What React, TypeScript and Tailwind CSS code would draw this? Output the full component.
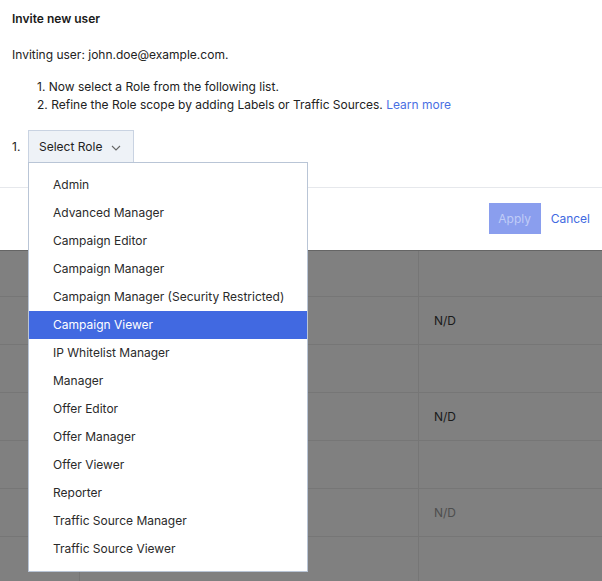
import React from "react";

const roles = [
  "Admin",
  "Advanced Manager",
  "Campaign Editor",
  "Campaign Manager",
  "Campaign Manager (Security Restricted)",
  "Campaign Viewer",
  "IP Whitelist Manager",
  "Manager",
  "Offer Editor",
  "Offer Manager",
  "Offer Viewer",
  "Reporter",
  "Traffic Source Manager",
  "Traffic Source Viewer",
];

const rows: { nd: string | null; light?: boolean }[] = [
  { nd: "N/D" },
  { nd: null },
  { nd: "N/D" },
  { nd: null },
  { nd: "N/D", light: true },
  { nd: null },
];

export default function App() {
  return (
    <div className="relative w-[602px] h-[581px] overflow-hidden bg-white font-['Inter',sans-serif] text-[12px] text-[#222]">
      {/* white dialog panel */}
      <div className="h-[250px] bg-white flex flex-col">
        <div className="px-3 pt-[10px]">
          <div className="h-[18px] leading-[18px] font-semibold text-[#1a1a1a]">Invite new user</div>
          <div className="mt-[18px] h-[18px] leading-[18px]">Inviting user: john.doe@example.com.</div>
          <ol className="mt-[14px] pl-[25px]">
            <li className="h-[18px] leading-[18px]">1. Now select a Role from the following list.</li>
            <li className="h-[18px] leading-[18px]">
              2. Refine the Role scope by adding Labels or Traffic Sources.{" "}
              <span className="text-[#4a6fe3]">Learn more</span>
            </li>
          </ol>
          <div className="mt-[16px] flex items-center">
            <span className="w-[16px]">1.</span>
            <div className="h-[33px] w-[106px] border border-[#c9d3e2] bg-[#eef2f7] flex items-center pl-[10px] gap-[9px] text-[#222]">
              <span>Select Role</span>
              <svg width="10" height="6" viewBox="0 0 10 6" className="mt-[2px]">
                <polyline points="1,1 5,5 9,1" fill="none" stroke="#666" strokeWidth="1.1" />
              </svg>
            </div>
          </div>
        </div>
        <div className="mt-[24px] border-t border-[#e6e8ec]" />
        <div className="flex justify-end items-start pt-[15px] pr-[12px] gap-[10px]">
          <div className="h-[31px] w-[52px] bg-[#8a9eee] text-[#c0ccf7] flex items-center justify-center pt-[1px]">Apply</div>
          <div className="h-[31px] flex items-center text-[#4169e1] pt-[1px]">Cancel</div>
        </div>
      </div>

      {/* dimmed table */}
      <div className="bg-[#808080] border-t border-[#656565]">
        <div className="flex h-[46px] border-b border-[#767676]">
          <div className="w-[80px] border-r border-[#767676]" />
          <div className="w-[339px] border-r border-[#767676]" />
          <div className="flex-1" />
        </div>
        {rows.map((r, i) => (
          <div key={i} className="flex h-[48px] border-b border-[#767676]">
            <div className="w-[80px] border-r border-[#767676]" />
            <div className="w-[339px] border-r border-[#767676]" />
            <div className={`flex-1 flex items-center pl-[15px] ${r.light ? "text-[#4e4e4e]" : "text-[#1a1a1a]"}`}>
              {r.nd}
            </div>
          </div>
        ))}
      </div>

      {/* dropdown menu */}
      <div className="absolute left-[28px] top-[162px] w-[280px] bg-white border border-[#b9c5d6] py-[8px]">
        {roles.map((role) => (
          <div
            key={role}
            className={`h-[28px] flex items-center pl-[24px] ${
              role === "Campaign Viewer" ? "bg-[#4169e1] text-white" : "text-[#2a2a2a]"
            }`}
          >
            {role}
          </div>
        ))}
      </div>
    </div>
  );
}
